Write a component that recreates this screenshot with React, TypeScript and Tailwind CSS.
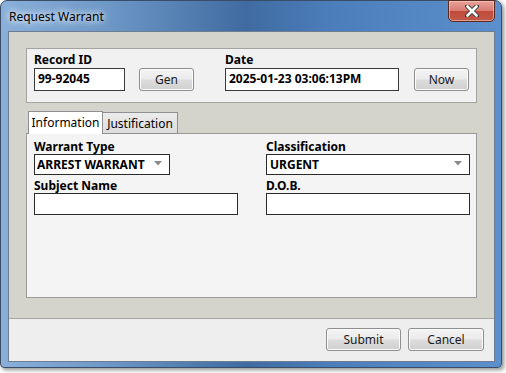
import React from "react";

const font = { fontFamily: '"Noto Sans", "Segoe UI", Tahoma, sans-serif' };

function Btn({ label, w }: { label: string; w: string }) {
  return (
    <div
      className={`${w} h-[23px] rounded-[3px] border border-[#8e8f8f] bg-[linear-gradient(to_bottom,#f4f4f4_0%,#ebebeb_48%,#dcdcdc_52%,#d0d0d0_100%)] shadow-[inset_0_0_0_1px_#fbfbfb] flex items-center justify-center text-[12px] text-[#1a1a1a]`}
    >
      {label}
    </div>
  );
}

function Arrow() {
  return (
    <svg width="8" height="5" viewBox="0 0 8 5" className="absolute right-[7px] top-[6px]">
      <path d="M0 0 L8 0 L4 4.5 Z" fill="#8a8a8a" />
    </svg>
  );
}

export default function App() {
  return (
    <div className="w-[506px] h-[373px] bg-white relative overflow-hidden" style={font}>
      <div className="w-[502px] h-[368px] rounded-t-[7px] rounded-b-[4px] border border-[#3b4d66] bg-[linear-gradient(to_right,#8ab0da_0%,#6f99c8_20%,#3f6ba1_49%,#4b7dba_65%,#5b90cd_100%)] shadow-[2px_2px_4px_rgba(0,0,0,0.45)] flex flex-col relative">
        {/* title bar */}
        <div className="h-[30px] flex items-start pl-[8px] pt-[8px] relative">
          <span className="text-[12px] leading-[16px] text-black [text-shadow:0_0_6px_#ffffff,0_0_10px_#ffffff]">
            Request Warrant
          </span>
          <div className="absolute left-[447px] top-[-1px] w-[47px] h-[22px] rounded-b-[5px] border border-[#5a2a24] bg-[linear-gradient(to_bottom,#e8a29a_0%,#d87d72_48%,#c24a3b_52%,#c05a48_100%)] flex items-center justify-center shadow-[inset_0_0_0_1px_rgba(255,220,210,0.5)]">
            <svg width="14" height="12" viewBox="0 0 14 12">
              <path d="M2 1 L12 11 M12 1 L2 11" stroke="#3a3a3a" strokeWidth="4.5" strokeLinecap="round" />
              <path d="M2.5 1.5 L11.5 10.5 M11.5 1.5 L2.5 10.5" stroke="#ffffff" strokeWidth="2.6" strokeLinecap="round" />
            </svg>
          </div>
        </div>
        {/* client */}
        <div className="ml-[7px] w-[487px] h-[331px] border border-[#6e7d92] flex flex-col bg-[#d5d4cc]">
          <div className="flex-1 px-[17px] pt-[16px]">
            {/* header group */}
            <div className="w-[451px] h-[55px] border border-[#a3a3a0] bg-[#f1f1f1] pl-[7px] pt-[3px] flex items-end pb-[11px]">
              <div className="flex flex-col">
                <span className="text-[12px] font-bold leading-[16px] text-black">Record ID</span>
                <div className="w-[91px] h-[23px] border border-[#3a3a3a] bg-white text-[12px] font-bold leading-[20px] pl-[3px] text-black">99-92045</div>
              </div>
              <div className="ml-[14px]">
                <Btn label="Gen" w="w-[55px]" />
              </div>
              <div className="flex flex-col ml-[31px]">
                <span className="text-[12px] font-bold leading-[16px] text-black">Date</span>
                <div className="w-[174px] h-[23px] border border-[#3a3a3a] bg-white text-[12px] font-bold leading-[20px] pl-[3px] text-black whitespace-nowrap">2025-01-23 03:06:13PM</div>
              </div>
              <div className="ml-[15px]">
                <Btn label="Now" w="w-[55px]" />
              </div>
            </div>
            {/* tabs */}
            <div className="mt-[8px] flex items-end pl-[2px] h-[23px] relative z-10">
              <div className="w-[75px] h-[23px] border border-[#8f9091] border-b-0 bg-white text-[12px] leading-[21px] text-center text-black">
                Information
              </div>
              <div className="w-[75px] h-[22px] border border-[#8f9091] border-l-0 bg-[linear-gradient(to_bottom,#ececec_0%,#dcdcdc_100%)] text-[12px] leading-[22px] text-center text-black">
                Justification
              </div>
            </div>
            <div className="w-[451px] h-[165px] -mt-[1px] border border-[#9a9a98] bg-[#f4f4f4] pl-[7px] pt-[5px] grid grid-cols-[232px_1fr]">
              <div className="flex flex-col">
                <span className="text-[12px] font-bold leading-[15px] text-black">Warrant Type</span>
                <div className="relative w-[136px] h-[21px] border border-[#2a2a2a] bg-white text-[12px] font-bold leading-[19px] pl-[2px] text-black whitespace-nowrap">
                  ARREST WARRANT
                  <Arrow />
                </div>
                <span className="mt-[3px] text-[12px] font-bold leading-[15px] text-black">Subject Name</span>
                <div className="w-[204px] h-[22px] border border-[#2a2a2a] bg-white" />
              </div>
              <div className="flex flex-col">
                <span className="text-[12px] font-bold leading-[15px] text-black">Classification</span>
                <div className="relative w-[204px] h-[21px] border border-[#2a2a2a] bg-white text-[12px] font-bold leading-[19px] pl-[3px] text-black">
                  URGENT
                  <Arrow />
                </div>
                <span className="mt-[3px] text-[12px] font-bold leading-[15px] text-black">D.O.B.</span>
                <div className="w-[204px] h-[22px] border border-[#2a2a2a] bg-white" />
              </div>
            </div>
          </div>
          {/* bottom bar */}
          <div className="h-[43px] border-t border-[#a8a8a4] bg-[#eeeeee] flex items-start justify-end pt-[9px] pr-[10px] gap-[7px]">
            <Btn label="Submit" w="w-[75px]" />
            <Btn label="Cancel" w="w-[76px]" />
          </div>
        </div>
      </div>
    </div>
  );
}
